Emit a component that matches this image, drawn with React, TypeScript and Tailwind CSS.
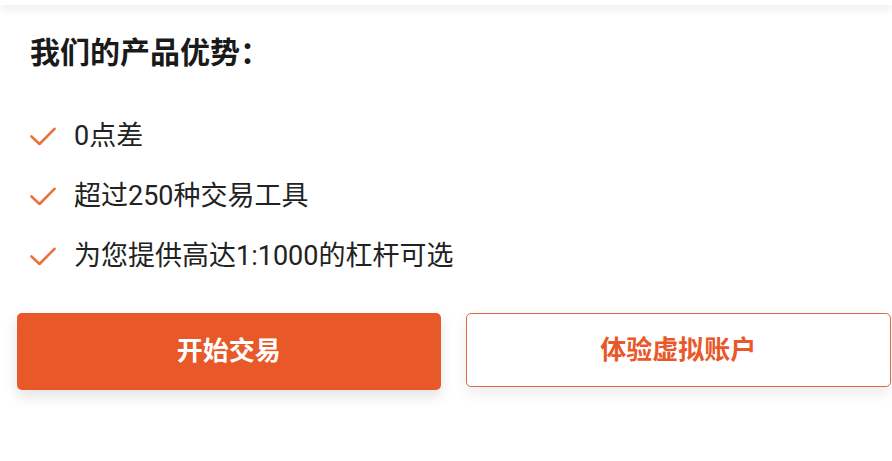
const features = ["0点差", "超过250种交易工具", "为您提供高达1:1000的杠杆可选"];

function CheckMark() {
    return (
        <svg width="26" height="19" viewBox="0 0 26 19" fill="none" className="shrink-0">
            <path d="M1.5 9.5 L9.5 17 L24.5 1.8" stroke="#e9733f" strokeWidth="2.6" strokeLinecap="round" strokeLinejoin="round" />
        </svg>
    )
}

export default function App() {
    return (
        <div className="w-[892px] h-[461px] bg-white overflow-hidden font-['Roboto','Noto_Sans_CJK_SC',sans-serif]">
            <div className="h-[5px] bg-white shadow-[0_3px_10px_rgba(0,0,0,0.12)]"></div>

            <div className="px-[30px] pt-[31px]">
                <h2 className="text-[30px] leading-[34px] font-bold text-[#1a1a1a]">我们的产品优势：</h2>

                <ul className="mt-[50px] flex flex-col gap-[28px]">
                    {features.map((f) => (
                        <li key={f} className="flex items-center h-[32px]">
                            <CheckMark />
                            <span className="ml-[18px] text-[27px] leading-[32px] text-[#222]">{f}</span>
                        </li>
                    ))}
                </ul>
            </div>

            <div className="flex gap-[25px] pl-[17px] pr-[1px] mt-[41px]">
                <button className="flex-1 h-[77px] rounded-[5px] bg-[#e85828] text-white text-[26px] font-bold shadow-[0_6px_14px_rgba(0,0,0,0.12)]">
                    开始交易
                </button>
                <button className="flex-1 h-[74px] rounded-[5px] border border-[#dc6a46] bg-white text-[#e85828] text-[26px] font-bold shadow-[0_6px_14px_rgba(0,0,0,0.08)]">
                    体验虚拟账户
                </button>
            </div>
        </div>
    )
}
